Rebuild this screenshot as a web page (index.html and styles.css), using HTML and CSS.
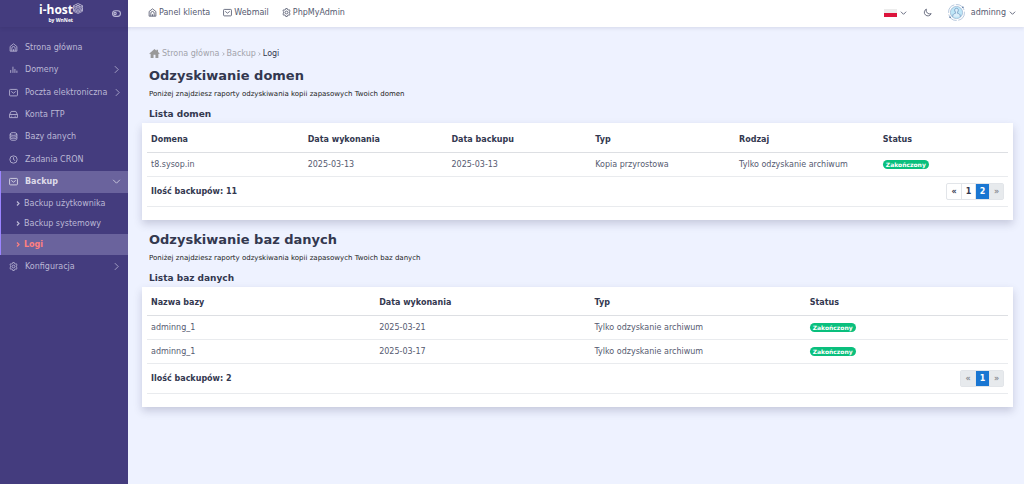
FILE: index.html
```html
<!DOCTYPE html>
<html lang="pl">
<head>
<meta charset="UTF-8">
<meta name="viewport" content="width=device-width, initial-scale=1.0">
<title>Logi - Backup</title>
<link rel="stylesheet" href="styles.css">
</head>
<body>
    <!-- Icons used more than once -->
    <svg class="sprite" aria-hidden="true">
        <symbol id="i-home" viewBox="0 0 16 16"><path d="M2 6.200 8 1.500l6 4.700v8.300H2zM5 14.500V9.200a3 3 0 0 1 6 0v5.300M8 14.500V11"/></symbol>
        <symbol id="i-mail" viewBox="0 0 16 16"><rect x="1" y="2.500" width="14" height="11.500" rx="1.500"/><path d="m4 6 4 3.200L12 6"/></symbol>
        <symbol id="i-gear" viewBox="0 0 16 16"><path d="m6.600 1h2.800l.5 1.900 1.200.7 1.900-.6 1.400 2.500-1.400 1.400v2.200l1.400 1.400-1.400 2.500-1.900-.6-1.200.7-.5 1.900H6.600l-.5-1.900-1.200-.7-1.900.6-1.400-2.500L3 9.100V6.900L1.600 5.500 3 3l1.900.6 1.200-.7z"/><circle cx="8" cy="8" r="2.500"/></symbol>
        <symbol id="i-right" viewBox="0 0 8 16"><path d="m1 2 6 6-6 6"/></symbol>
        <symbol id="i-down" viewBox="0 0 16 8"><path d="m2 1 6 6 6-6"/></symbol>
        <symbol id="i-bullet" viewBox="0 0 4 5"><path d="m1 .5 2 2-2 2"/></symbol>
    </svg>

    <aside class="sidebar">
        <div class="brand">
            <a class="logo" href="#" aria-label="i-host by WnNet">
                <span class="logo-text"><span class="logo-name">i-host</span><span class="logo-by">by WnNet</span></span>
                <svg class="logo-mark" viewBox="0 0 20 22"><path d="M10 1 19 5.500v3L10 13 1 8.500v-3zM1 5.500l9 4.500 9-4.500M5.500 3.300l9 4.500M14.500 3.300l-9 4.500M1 11.500l9 4.500 9-4.500M1 14l9 4.500 9-4.500M1 9v7.500L10 21l9-4.500V9"/></svg>
            </a>
            <button class="toggle" aria-label="Menu"><svg class="icon" viewBox="0 0 16 12"><rect x="1" y="1" width="14" height="10" rx="5"/><circle cx="5.500" cy="6" r="2"/></svg></button>
        </div>
        <nav>
            <ul class="menu">
                <li><a href="#"><svg class="icon"><use href="#i-home"/></svg>Strona główna</a></li>
                <li><a href="#"><svg class="icon" viewBox="0 0 16 16"><path d="M3 9v5M7 3v11M10.500 7v7M14 10v4"/></svg>Domeny<svg class="arrow"><use href="#i-right"/></svg></a></li>
                <li><a href="#"><svg class="icon"><use href="#i-mail"/></svg>Poczta elektroniczna<svg class="arrow"><use href="#i-right"/></svg></a></li>
                <li><a href="#"><svg class="icon" viewBox="0 0 16 16"><path d="M1 8 4 2.500h8L15 8v5.500H1zM1 8h14M4 11h1.500M10 11h2"/></svg>Konta FTP</a></li>
                <li><a href="#"><svg class="icon" viewBox="0 0 16 16"><ellipse cx="8" cy="3.500" rx="6" ry="2.500"/><path d="M2 3.500v9C2 14 5 15 8 15s6-1 6-2.500v-9M2 6.500C2 8 5 9 8 9s6-1 6-2.500M2 9.500C2 11 5 12 8 12s6-1 6-2.500"/></svg>Bazy danych</a></li>
                <li><a href="#"><svg class="icon" viewBox="0 0 16 16"><circle cx="8" cy="8" r="6.500"/><path d="M8 4v4l3 2"/></svg>Zadania CRON</a></li>
                <li class="active"><a href="#"><svg class="icon"><use href="#i-mail"/></svg>Backup<svg class="arrow arrow-down"><use href="#i-down"/></svg></a></li>
            </ul>
            <ul class="submenu">
                <li><a href="#"><svg class="bullet"><use href="#i-bullet"/></svg>Backup użytkownika</a></li>
                <li><a href="#"><svg class="bullet"><use href="#i-bullet"/></svg>Backup systemowy</a></li>
                <li class="current"><a href="#"><svg class="bullet"><use href="#i-bullet"/></svg>Logi</a></li>
            </ul>
            <ul class="menu-extra">
                <li><a href="#"><svg class="icon"><use href="#i-gear"/></svg>Konfiguracja<svg class="arrow"><use href="#i-right"/></svg></a></li>
            </ul>
        </nav>
    </aside>

    <div class="page">
        <header class="topbar">
            <nav class="links">
                <a href="#"><svg class="icon"><use href="#i-home"/></svg>Panel klienta</a>
                <a href="#"><svg class="icon"><use href="#i-mail"/></svg>Webmail</a>
                <a href="#"><svg class="icon"><use href="#i-gear"/></svg>PhpMyAdmin</a>
            </nav>
            <div class="user">
                <button class="lang" aria-label="Polski"><span class="flag"></span><svg class="caret"><use href="#i-down"/></svg></button>
                <button class="theme" aria-label="Tryb ciemny"><svg class="icon" viewBox="0 0 16 16"><path d="M6 2a6.300 6.300 0 1 0 8.500 8A6.300 6.300 0 0 1 6 2z"/></svg></button>
                <button class="account">
                    <svg class="avatar" viewBox="0 0 32 32"><circle class="avatar-ring" cx="16" cy="16" r="15"/><circle class="avatar-bg" cx="16" cy="16" r="11.500"/><path class="avatar-man" d="M9 24v-2c0-3 3-4 5-4.500v-2c-3-4-1-7.500 2-7.500s5 3.500 2 7.500v2c2 .5 5 1.500 5 4.500v2"/><circle class="avatar-dot" cx="4" cy="25" r="1.500"/><circle class="avatar-dot" cx="28" cy="6" r="1.500"/></svg>
                    adminng<svg class="caret"><use href="#i-down"/></svg>
                </button>
            </div>
        </header>

        <main>
            <nav class="breadcrumb">
                <svg class="home" viewBox="0 0 16 14"><path d="M8 0 0 7l1 1 1-.8V14h4.500V9h3v5H14V7.200l1 .8 1-1-2.500-2.200V1H11v1.600z"/></svg>
                <a href="#">Strona główna</a><svg class="bullet"><use href="#i-bullet"/></svg><a href="#">Backup</a><svg class="bullet"><use href="#i-bullet"/></svg><span>Logi</span>
            </nav>

            <section>
                <h1>Odzyskiwanie domen</h1>
                <p>Poniżej znajdziesz raporty odzyskiwania kopii zapasowych Twoich domen</p>
                <h2>Lista domen</h2>
                <div class="card">
                    <table class="domains">
                        <thead>
                            <tr><th>Domena</th><th>Data wykonania</th><th>Data backupu</th><th>Typ</th><th>Rodzaj</th><th>Status</th></tr>
                        </thead>
                        <tbody>
                            <tr><td>t8.sysop.in</td><td>2025-03-13</td><td>2025-03-13</td><td>Kopia przyrostowa</td><td>Tylko odzyskanie archiwum</td><td><span class="badge">Zakończony</span></td></tr>
                        </tbody>
                    </table>
                    <div class="summary">
                        <span>Ilość backupów: 11</span>
                        <div class="pagination"><a href="#">«</a><a href="#">1</a><a class="on" href="#">2</a><a class="off" href="#">»</a></div>
                    </div>
                </div>
            </section>

            <section>
                <h1>Odzyskiwanie baz danych</h1>
                <p>Poniżej znajdziesz raporty odzyskiwania kopii zapasowych Twoich baz danych</p>
                <h2>Lista baz danych</h2>
                <div class="card">
                    <table class="databases">
                        <thead>
                            <tr><th>Nazwa bazy</th><th>Data wykonania</th><th>Typ</th><th>Status</th></tr>
                        </thead>
                        <tbody>
                            <tr><td>adminng_1</td><td>2025-03-21</td><td>Tylko odzyskanie archiwum</td><td><span class="badge">Zakończony</span></td></tr>
                            <tr><td>adminng_1</td><td>2025-03-17</td><td>Tylko odzyskanie archiwum</td><td><span class="badge">Zakończony</span></td></tr>
                        </tbody>
                    </table>
                    <div class="summary">
                        <span>Ilość backupów: 2</span>
                        <div class="pagination"><a class="off" href="#">«</a><a class="on" href="#">1</a><a class="off" href="#">»</a></div>
                    </div>
                </div>
            </section>
        </main>
    </div>
</body>
</html>
```
FILE: styles.css
```css
* {
    box-sizing: border-box;
}
body {
    display: flex;
    min-height: 100vh;
    margin: 0;
    font: 8px/11px "DejaVu Sans", sans-serif;
    color: #555a70;
    background: #eef2ff;
}
a {
    color: inherit;
    text-decoration: none;
}
ul {
    margin: 0;
    padding: 0;
    list-style: none;
}
button {
    display: flex;
    align-items: center;
    padding: 0;
    border: none;
    background: none;
    font: inherit;
    color: inherit;
    cursor: pointer;
}
svg {
    flex: none;
    fill: none;
    stroke: currentColor;
}
.sprite {
    position: absolute;
    width: 0;
    height: 0;
}
.icon {
    width: 9px;
    height: 9px;
    stroke-width: 1.5;
}

/* Sidebar */
.sidebar {
    flex: none;
    width: 128px;
    background: #443c7e;
    color: #bbb8d5;
    white-space: nowrap;
}
.brand {
    display: flex;
    align-items: center;
    justify-content: space-between;
    height: 27px;
    margin-bottom: 9px;
    padding: 0 7px 0 39px;
    box-shadow: 0 1px 4px rgba(40, 34, 80, 0.2);
}
.logo {
    display: flex;
    color: #fff;
}
.logo-text {
    display: flex;
    flex-direction: column;
    align-items: flex-end;
    font-family: "Open Sans", sans-serif;
    font-weight: bold;
}
.logo-name {
    font-size: 12px;
    line-height: 14px;
}
.logo-by {
    font-size: 5px;
    line-height: 7px;
}
.logo-mark {
    width: 10px;
    height: 11px;
    stroke-width: 1.5;
    color: #c9c6dd;
}
.toggle .icon {
    stroke-width: 2;
}
.menu {
    display: grid;
    grid-auto-rows: 1fr;
    min-height: 157px;
}
.menu-extra {
    display: grid;
    min-height: 23px;
}
.menu a, .menu-extra a {
    display: flex;
    align-items: center;
    gap: 7px;
    height: 100%;
    padding: 0 9px;
}
.arrow {
    width: 5px;
    height: 9px;
    margin-left: auto;
    stroke-width: 1.4;
}
.arrow-down {
    width: 9px;
    height: 5px;
}
.menu a .arrow {
    margin-left: auto;
}
.menu li:nth-child(3) a {
    padding-right: 8px;
    gap: 7px;
}
.active {
    background: #6a639d;
    border-left: 1px solid #9b84ff;
    color: #dddbe9;
    font-weight: bold;
}
.active a {
    padding: 0 7px 0 8px;
}
.submenu {
    display: grid;
    grid-auto-rows: 1fr;
    min-height: 62px;
    border-left: 1px solid #9b84ff;
}
.submenu a {
    display: flex;
    align-items: center;
    gap: 4px;
    height: 100%;
    padding-left: 15px;
}
.bullet {
    width: 4px;
    height: 5px;
    stroke-width: 1.2;
}
.current {
    background: #6a639d;
    color: #ff8080;
    font-weight: bold;
}

/* Top bar */
.page {
    flex: 1;
    min-width: 0;
}
.topbar {
    display: flex;
    align-items: center;
    justify-content: space-between;
    height: 27px;
    padding: 0 8px 2px 20px;
    background: #fff;
    box-shadow: 0 1px 4px rgba(60, 60, 110, 0.15);
}
.links {
    display: flex;
    gap: 13px;
}
.links a {
    display: flex;
    align-items: center;
    gap: 2px;
}
.user {
    display: flex;
    align-items: center;
}
.lang {
    gap: 3px;
}
.flag {
    width: 13px;
    height: 8px;
    background: linear-gradient(#ececec 50%, #dc143c 50%);
}
.caret {
    width: 7px;
    height: 4px;
    stroke-width: 2;
}
.theme {
    margin: 0 16px;
}
.avatar {
    width: 17px;
    height: 17px;
    margin-right: 6px;
}
.account .caret {
    margin-left: 3px;
}
.avatar-ring {
    stroke: #7d9bc0;
    stroke-dasharray: 20 3;
}
.avatar-bg {
    fill: #bfe6f7;
    stroke: #7d9bc0;
}
.avatar-man {
    fill: #dceefa;
    stroke: #6f94bd;
    stroke-width: 1.5;
}
.avatar-dot {
    fill: #4f6f9c;
    stroke: none;
}

/* Content */
main {
    padding: 21px 11px 20px 14px;
}
.breadcrumb {
    display: flex;
    align-items: center;
    gap: 2px;
    padding-left: 7px;
    margin-bottom: 9px;
    color: #a2a3ab;
}
.breadcrumb .bullet {
    width: 3px;
    height: 4px;
}
.breadcrumb span {
    color: #33384f;
}
.home {
    width: 11px;
    height: 9px;
    fill: #999;
    stroke: none;
}
section {
    margin-bottom: 12px;
}
h1, h2, p {
    margin: 0;
    padding-left: 7px;
    color: #33384f;
}
h1 {
    font-size: 13px;
    line-height: 16px;
}
p {
    margin: 5px 0 9px;
    font-size: 7px;
    line-height: 11px;
    color: #222;
}
h2 {
    margin-bottom: 4px;
    font-size: 9px;
    line-height: 10px;
}
.card {
    padding: 4px 5px 13px;
    background: #fff;
    box-shadow: 0 4px 8px rgba(60, 60, 100, 0.22);
}
table {
    width: 100%;
    table-layout: fixed;
    border-collapse: collapse;
}
th, td {
    height: 24px;
    padding: 0 4px;
    border-bottom: 1px solid #e9ebee;
    text-align: left;
}
th {
    height: 25px;
    border-bottom-color: #dddfe3;
    color: #33384f;
}
.domains th {
    width: 16.7%;
}
.domains th:first-child {
    width: 18.2%;
}
.databases th {
    width: 25%;
}
.databases th:first-child {
    width: 26.5%;
}
.domains th:last-child, .databases th:last-child {
    width: auto;
}
.badge {
    display: inline-block;
    padding: 0 3px;
    border-radius: 5px;
    background: #0abf7d;
    color: #fff;
    font-size: 6px;
    line-height: 9px;
    font-weight: bold;
    vertical-align: middle;
}
.summary {
    display: flex;
    align-items: center;
    justify-content: space-between;
    height: 30px;
    padding: 0 4px;
    border-bottom: 1px solid #e9ebee;
    font-weight: bold;
    color: #33384f;
}
.pagination {
    display: flex;
    border: 1px solid #e2e5e9;
    border-radius: 2px;
}
.pagination a {
    width: 14px;
    line-height: 15px;
    text-align: center;
}
.pagination a + a {
    border-left: 1px solid #e2e5e9;
}
.pagination .on {
    background: #1976d2;
    color: #fff;
}
.pagination .off {
    background: #e7eaed;
    color: #8a8d94;
}
```
